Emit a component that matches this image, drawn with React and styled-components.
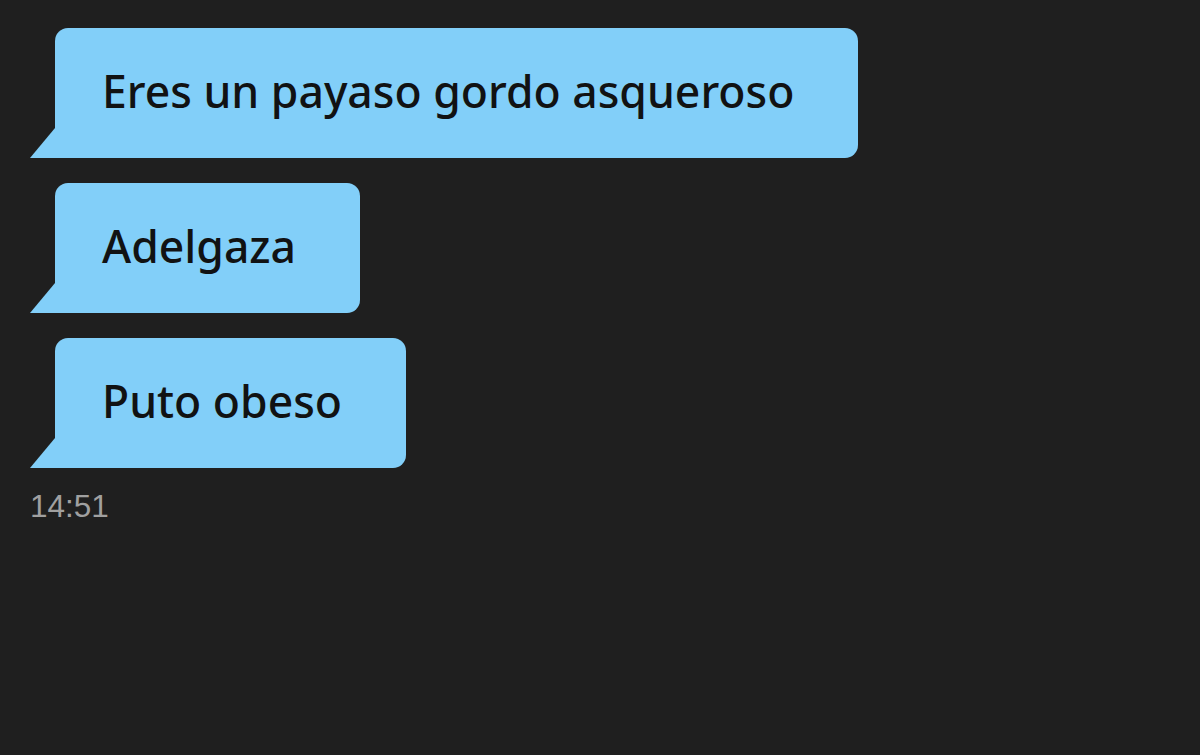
import React from 'react'
import styled, { createGlobalStyle } from 'styled-components'

const GlobalStyle = createGlobalStyle`
    html, body {
        margin: 0;
        padding: 0;
        background: #1f1f1f;
    }
    body {
        font-family: "Noto Sans", "Open Sans", sans-serif;
    }
`

const Thread = styled.div`
    display: flex;
    flex-direction: column;
    align-items: flex-start;
    gap: 25px;
    padding: 28px 0 0 30px;
    min-height: 755px;
    box-sizing: border-box;
`

const Bubble = styled.div`
    position: relative;
    margin-left: 25px;
    height: 130px;
    box-sizing: border-box;
    padding: 0 64px 6px 47px;
    display: flex;
    align-items: center;
    background: #82cff9;
    color: #111213;
    border-radius: 13px 13px 13px 0;
    font-size: 44.5px;
    font-weight: 500;
    white-space: nowrap;

    &::before {
        content: '';
        position: absolute;
        left: -25px;
        bottom: 0;
        width: 25px;
        height: 30px;
        background: #82cff9;
        clip-path: polygon(100% 0, 100% 100%, 0 100%);
    }
`

const Time = styled.div`
    margin-top: -5px;
    font-family: "Liberation Sans", Arial, sans-serif;
    font-size: 31.5px;
    color: #a0a0a0;
`

const messages = ['Eres un payaso gordo asqueroso', 'Adelgaza', 'Puto obeso']

export default function App() {
    return (
        <>
            <GlobalStyle />
            <Thread>
                {messages.map(text => (
                    <Bubble key={text}>{text}</Bubble>
                ))}
                <Time>14:51</Time>
            </Thread>
        </>
    )
}
